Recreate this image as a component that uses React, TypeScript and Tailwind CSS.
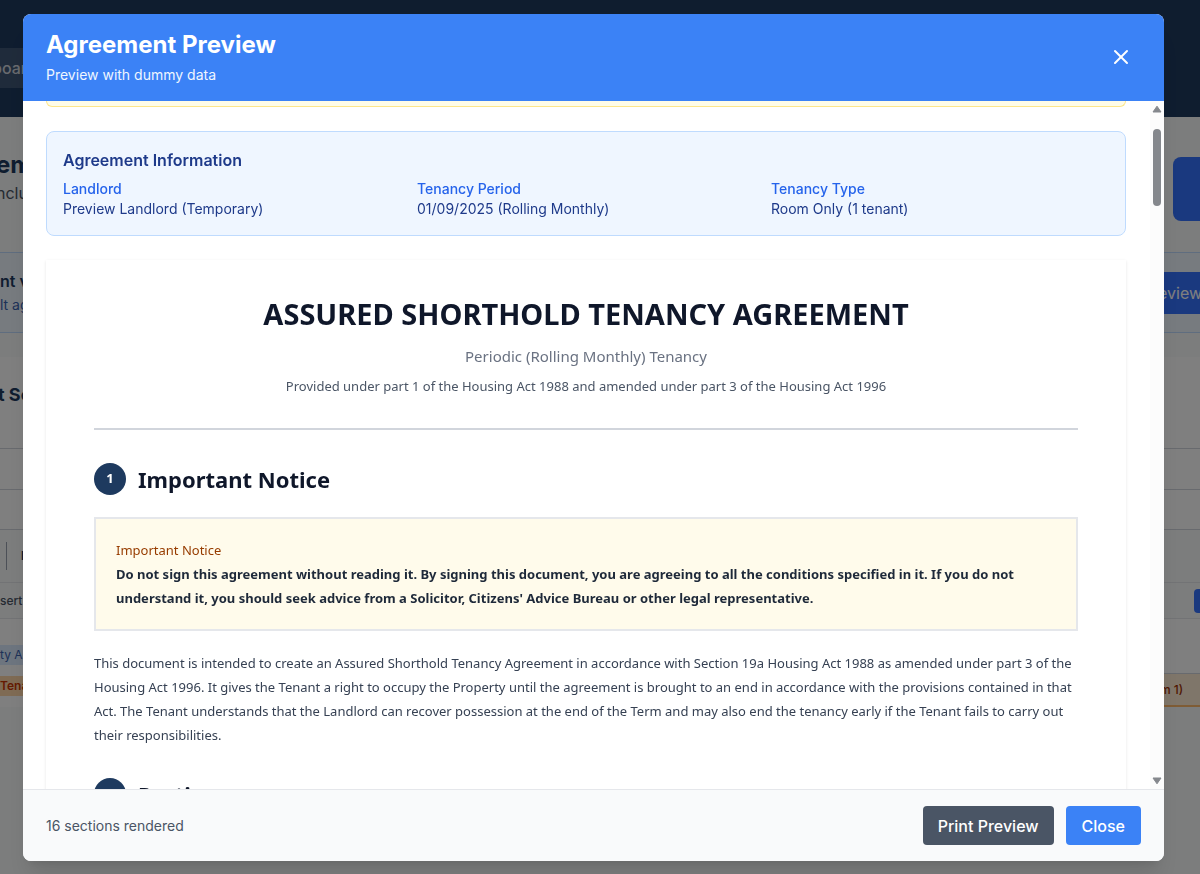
import type { ReactNode } from "react";
import { X } from "lucide-react";

const INFO = [
  { label: "Landlord", value: "Preview Landlord (Temporary)" },
  { label: "Tenancy Period", value: "01/09/2025 (Rolling Monthly)" },
  { label: "Tenancy Type", value: "Room Only (1 tenant)" },
];

function TemplatePage() {
  return (
    <div className="h-screen overflow-hidden bg-gray-50 text-[#1e3a5f]" aria-hidden="true">
      <header className="flex h-[117px] items-start bg-[#1e3a5f] pt-12">
        <span className="-ml-2 flex h-10 w-12 items-center bg-white/15 text-base font-medium text-gray-300">boar</span>
      </header>

      <div className="flex h-[135px] items-start justify-between pt-8">
        <div className="-ml-1">
          <h1 className="text-2xl leading-8 font-bold">em</h1>
          <p className="text-base leading-6 text-gray-600">nclu</p>
        </div>
        <span className="mt-2 h-16 w-[27px] rounded-l-lg bg-[#3472ff]" />
      </div>

      <div className="flex h-[81px] items-center justify-between border-y border-blue-200 bg-blue-50">
        <div>
          <p className="text-base leading-6 font-semibold">nt v</p>
          <p className="text-sm leading-6 text-[#3b63b0]">lt ag</p>
        </div>
        <span className="flex h-[42px] w-[42px] items-center bg-[#3472ff] text-base text-white">eview</span>
      </div>

      <div className="mt-6 bg-white">
        <div className="flex h-[92px] items-center border-b border-gray-300 pb-4">
          <h2 className="-ml-0.5 text-lg font-bold">t Se</h2>
        </div>
        <div className="h-[41px] border-b border-gray-300" />
        <div className="h-10 border-b border-gray-300" />
        <div className="flex h-[53px] items-center border-b border-gray-200 bg-gray-50 pl-1.5">
          <span className="h-7 w-px bg-gray-400" />
          <span className="ml-3.5 text-xs font-bold">I</span>
        </div>
        <div className="flex h-9 items-center justify-between border-b border-gray-200 bg-gray-50">
          <span className="text-xs font-medium text-gray-600">sert</span>
          <span className="h-6 w-1.5 rounded-l bg-[#3472ff]" />
        </div>
        <div className="flex justify-between">
          <div className="pt-[26px]">
            <p className="w-10 bg-blue-100 text-xs leading-5 text-[#3b63b0]">ty A</p>
            <p className="mt-[11px] w-10 bg-orange-200 text-xs leading-5 font-semibold text-orange-700">Tena</p>
          </div>
          <p className="mt-[54px] flex h-[34px] w-10 items-center border-t border-b-2 border-t-gray-300 border-b-orange-300 bg-orange-100 text-xs font-medium text-orange-800">
            m 1)
          </p>
        </div>
      </div>
    </div>
  );
}

function SectionHeading({ number, children }: { number: number; children: ReactNode }) {
  return (
    <div className="flex items-center gap-3">
      <span className="flex size-8 shrink-0 items-center justify-center rounded-full bg-[#1e3a5f] text-[13px] font-bold text-white">
        {number}
      </span>
      <h3 className="text-[22px] leading-8 font-bold text-[#0f172a]">{children}</h3>
    </div>
  );
}

function AgreementDocument() {
  return (
    <article className="mt-6 bg-white px-12 pt-9 font-['Noto_Sans','Open_Sans',sans-serif] shadow-sm">
      <div className="border-b-2 border-gray-300 pb-8 text-center">
        <h2 className="text-[29px] leading-9 font-bold text-[#0f172a]">ASSURED SHORTHOLD TENANCY AGREEMENT</h2>
        <p className="mt-3 text-[15px] leading-6 text-gray-500">Periodic (Rolling Monthly) Tenancy</p>
        <p className="mt-2 text-[13px] leading-5 text-gray-600">
          Provided under part 1 of the Housing Act 1988 and amended under part 3 of the Housing Act 1996
        </p>
      </div>

      <section className="mt-[33px]">
        <SectionHeading number={1}>Important Notice</SectionHeading>
        <div className="mt-[22px] border-2 border-gray-200 bg-amber-50 px-5 py-[19px] text-[13px] leading-6">
          <p className="text-amber-800">Important Notice</p>
          <p className="font-bold text-gray-800">
            Do not sign this agreement without reading it. By signing this document, you are agreeing to all the
            conditions specified in it. If you do not understand it, you should seek advice from a Solicitor, Citizens'
            Advice Bureau or other legal representative.
          </p>
        </div>
        <p className="mt-5 text-[13px] leading-6 text-gray-700">
          This document is intended to create an Assured Shorthold Tenancy Agreement in accordance with Section 19a
          Housing Act 1988 as amended under part 3 of the Housing Act 1996. It gives the Tenant a right to occupy the
          Property until the agreement is brought to an end in accordance with the provisions contained in that Act. The
          Tenant understands that the Landlord can recover possession at the end of the Term and may also end the
          tenancy early if the Tenant fails to carry out their responsibilities.
        </p>
      </section>

      <section className="mt-[31px]">
        <SectionHeading number={2}>Parties</SectionHeading>
      </section>
    </article>
  );
}

function Scrollbar() {
  return (
    <div className="flex w-3.5 shrink-0 flex-col items-center bg-[#fcfcfc] pt-1 pb-1" aria-hidden="true">
      <svg className="h-2 w-2.5 fill-[#85888d]" viewBox="0 0 10 8">
        <path d="M5 1.2 9 7H1z" stroke="#85888d" strokeLinejoin="round" />
      </svg>
      <span className="mt-4 h-[77px] w-2 rounded-full bg-[#85888d]" />
      <svg className="mt-auto h-2 w-2.5 fill-[#85888d]" viewBox="0 0 10 8">
        <path d="M5 6.8 1 1h8z" stroke="#85888d" strokeLinejoin="round" />
      </svg>
    </div>
  );
}

export default function App() {
  return (
    <div className="font-['Inter','Liberation_Sans',sans-serif]">
      <TemplatePage />

      <div className="fixed inset-0 flex bg-black/50 pt-3.5 pr-9 pb-[13px] pl-[23px]">
        <div
          role="dialog"
          aria-labelledby="preview-title"
          className="flex min-w-0 flex-1 flex-col overflow-hidden rounded-lg bg-white shadow-xl"
        >
          <header className="flex items-center justify-between bg-[#3b82f6] px-[23px] pt-[15px] pb-4 text-white">
            <div>
              <h1 id="preview-title" className="text-2xl leading-8 font-bold">
                Agreement Preview
              </h1>
              <p className="mt-1 text-sm leading-5 text-blue-50">Preview with dummy data</p>
            </div>
            <button type="button" aria-label="Close preview" className="p-2">
              <X size={24} strokeWidth={2} />
            </button>
          </header>

          <div className="flex min-h-0 flex-1">
            <div className="min-w-0 flex-1 overflow-hidden pr-6 pl-[23px]">
              <div className="h-1.5 rounded-b-lg border border-t-0 border-[#fde68a] bg-[#fefce8]" />

              <section className="mt-6 rounded-lg border border-[#bfdbfe] bg-blue-50 p-4">
                <h2 className="text-base leading-6 font-semibold text-[#1e3a8a]">Agreement Information</h2>
                <dl className="mt-[7px] grid grid-cols-3 gap-4 text-sm leading-5">
                  {INFO.map((item) => (
                    <div key={item.label}>
                      <dt className="font-medium text-[#2563eb]">{item.label}</dt>
                      <dd className="text-[#1e3a8a]">{item.value}</dd>
                    </div>
                  ))}
                </dl>
              </section>

              <AgreementDocument />
            </div>
            <Scrollbar />
          </div>

          <footer className="flex items-center justify-between border-t border-gray-200 bg-gray-50 px-[23px] py-4">
            <p className="text-sm text-gray-600">16 sections rendered</p>
            <div className="flex gap-3">
              <button type="button" className="h-[39px] rounded bg-gray-600 px-[15px] text-base font-medium text-white">
                Print Preview
              </button>
              <button type="button" className="h-[39px] rounded bg-[#3b82f6] px-4 text-base font-medium text-white">
                Close
              </button>
            </div>
          </footer>
        </div>
      </div>
    </div>
  );
}
